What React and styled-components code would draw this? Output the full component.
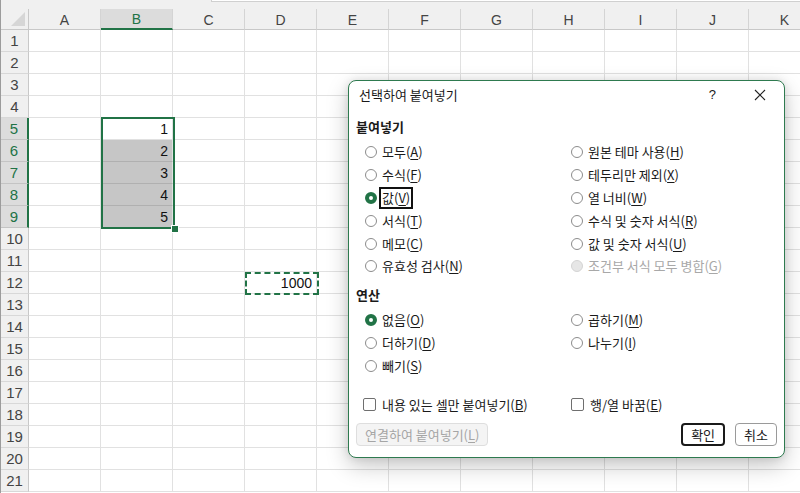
import styled, { createGlobalStyle } from "styled-components";

const GREEN = "#217346";
const COLS = ["A", "B", "C", "D", "E", "F", "G", "H", "I", "J", "K"];
const ROWS = Array.from({ length: 21 }, (_, i) => i + 1);
const VALUES = { "B5": "1", "B6": "2", "B7": "3", "B8": "4", "B9": "5", "D12": "1000" };

const Global = createGlobalStyle`
  html, body { margin: 0; padding: 0; background: #fff; }
  body { font-family: "Noto Sans CJK KR", "Noto Sans", sans-serif; }
`;

const Page = styled.div`
  position: relative;
  width: 800px;
  height: 493px;
  overflow: hidden;
  background: #fff;
  border-left: 1px solid #9c9c9c;
  box-sizing: border-box;
`;

const TopStrip = styled.div`
  height: 9px;
  background: #f0f0f0;
  display: flex;
`;

const FormulaEdge = styled.div`
  margin-left: 210px;
  flex: 1;
  height: 1px;
  background: #fff;
  border-left: 1px solid #d0d0d0;
  border-bottom: 1px solid #d0d0d0;
`;

const Sheet = styled.div`
  position: relative;
  display: grid;
  grid-template-columns: 28px repeat(11, 72px);
  grid-template-rows: 21px repeat(21, 22px);
  font-family: "Liberation Sans", "Open Sans", sans-serif;
  font-size: 14px;
`;

const Corner = styled.div`
  background: #f0f0f0;
  border-right: 1px solid #c8c8c8;
  border-bottom: 1px solid #c8c8c8;
  position: relative;
  &::after {
    content: "";
    position: absolute;
    right: 3px;
    bottom: 3px;
    border-style: solid;
    border-width: 0 0 14px 14px;
    border-color: transparent transparent #d6d6d6 transparent;
  }
`;

const ColHead = styled.div`
  box-sizing: border-box;
  background: ${(p) => (p.$active ? "#dcdcdc" : "#f0f0f0")};
  color: ${(p) => (p.$active ? GREEN : "#444")};
  border-right: 1px solid #d4d4d4;
  border-bottom: ${(p) => (p.$active ? `2px solid ${GREEN}` : "1px solid #c8c8c8")};
  display: flex;
  align-items: center;
  justify-content: center;
  padding-top: 1px;
`;

const RowHead = styled.div`
  box-sizing: border-box;
  background: ${(p) => (p.$active ? "#dcdcdc" : "#f0f0f0")};
  color: ${(p) => (p.$active ? GREEN : "#444")};
  border-right: ${(p) => (p.$active ? `2px solid ${GREEN}` : "1px solid #c8c8c8")};
  border-bottom: 1px solid ${(p) => (p.$active ? "#c4c4c4" : "#d8d8d8")};
  display: flex;
  align-items: center;
  justify-content: center;
  font-size: 15px;
`;

const Cell = styled.div`
  box-sizing: border-box;
  background: ${(p) => (p.$shade ? "#c6c6c6" : "#fff")};
  border-right: 1px solid #e1e1e1;
  border-bottom: 1px solid ${(p) => (p.$shade ? "#b0b0b0" : "#e1e1e1")};
  display: flex;
  align-items: center;
  justify-content: flex-end;
  padding-right: 4px;
  color: #111;
`;

const Selection = styled.div`
  position: absolute;
  left: 100px;
  top: 108px;
  width: 74px;
  height: 112px;
  border: 2px solid ${GREEN};
  box-sizing: border-box;
  pointer-events: none;
`;

const FillHandle = styled.div`
  position: absolute;
  left: 170px;
  top: 216px;
  width: 6px;
  height: 6px;
  background: ${GREEN};
  border: 1px solid #fff;
`;

const Marquee = styled.div`
  position: absolute;
  left: 244px;
  top: 263px;
  width: 74px;
  height: 23px;
  border: 2px dashed ${GREEN};
  box-sizing: border-box;
`;

const Dialog = styled.div`
  position: absolute;
  left: 347px;
  top: 80px;
  width: 437px;
  height: 378px;
  box-sizing: border-box;
  background: #fff;
  border: 1px solid #2e7a4f;
  border-radius: 8px;
  box-shadow: 0 8px 22px rgba(0, 0, 0, 0.22), 0 0 8px rgba(0, 0, 0, 0.1);
  display: flex;
  flex-direction: column;
  font-family: "Noto Sans CJK KR", "Noto Sans", sans-serif;
  font-size: 13px;
  color: #1a1a1a;
`;

const TitleBar = styled.div`
  height: 27px;
  display: flex;
  align-items: center;
  padding-left: 10px;
  padding-right: 18px;
`;

const Title = styled.div`
  flex: 1;
  line-height: 16px;
`;

const HelpMark = styled.span`
  font-family: "Liberation Sans", sans-serif;
  font-size: 13px;
  margin-right: 38px;
`;

const Body = styled.div`
  display: flex;
  flex-direction: column;
  padding: 0 7px;
`;

const SectionLabel = styled.div`
  font-weight: 700;
  height: 20px;
  line-height: 20px;
  margin-top: ${(p) => p.$mt}px;
`;

const OptionGrid = styled.div`
  display: grid;
  grid-template-columns: 206px 1fr;
  grid-auto-rows: 22.8px;
  padding-left: 9px;
  margin-top: 4px;
`;

const Option = styled.div`
  display: flex;
  align-items: center;
  gap: 5px;
  color: ${(p) => (p.$disabled ? "#a8a8a8" : "#1a1a1a")};
  grid-column: ${(p) => p.$col};
  grid-row: ${(p) => p.$row};
`;

const Radio = styled.span`
  width: 12px;
  height: 12px;
  box-sizing: border-box;
  border-radius: 50%;
  flex: none;
  border: ${(p) =>
    p.$checked ? `4px solid ${GREEN}` : p.$disabled ? "1px solid #d4d4d4" : "1px solid #8c8c8c"};
  background: ${(p) => (p.$disabled ? "#e6e6e6" : "#fff")};
`;

const Label = styled.span`
  line-height: 16px;
  padding: 1px 1px;
  border: 2px solid ${(p) => (p.$focus ? "#111" : "transparent")};
  margin-left: -3px;
  & u {
    text-decoration: underline;
    text-underline-offset: 2px;
  }
`;

const CheckGrid = styled.div`
  display: grid;
  grid-template-columns: 208px 1fr;
  padding-left: 7px;
  margin-top: 16px;
  height: 23px;
`;

const CheckOption = styled.div`
  display: flex;
  align-items: center;
  gap: 6px;
`;

const Box = styled.span`
  width: 13px;
  height: 13px;
  box-sizing: border-box;
  border: 1px solid #6f6f6f;
  border-radius: 2px;
  flex: none;
`;

const ButtonRow = styled.div`
  display: flex;
  align-items: center;
  margin-top: 7px;
`;

const Button = styled.div`
  height: 23px;
  box-sizing: border-box;
  padding: 0 ${(p) => p.$px}px;
  display: flex;
  align-items: center;
  justify-content: center;
  border-radius: 4px;
  line-height: 16px;
  background: ${(p) => (p.$disabled ? "#f4f4f4" : "#fff")};
  color: ${(p) => (p.$disabled ? "#a5a5a5" : "#1a1a1a")};
  border: ${(p) =>
    p.$primary ? "2px solid #1a1a1a" : p.$disabled ? "1px solid #dedede" : "1px solid #9a9a9a"};
  margin-left: ${(p) => p.$ml || 0}px;
  & u {
    text-underline-offset: 2px;
  }
`;

const Spacer = styled.div`
  flex: 1;
`;

const pasteOptions = [
  { t: "모두", k: "A", col: 1, row: 1 },
  { t: "수식", k: "F", col: 1, row: 2 },
  { t: "값", k: "V", col: 1, row: 3, checked: true, focus: true },
  { t: "서식", k: "T", col: 1, row: 4 },
  { t: "메모", k: "C", col: 1, row: 5 },
  { t: "유효성 검사", k: "N", col: 1, row: 6 },
  { t: "원본 테마 사용", k: "H", col: 2, row: 1 },
  { t: "테두리만 제외", k: "X", col: 2, row: 2 },
  { t: "열 너비", k: "W", col: 2, row: 3 },
  { t: "수식 및 숫자 서식", k: "R", col: 2, row: 4 },
  { t: "값 및 숫자 서식", k: "U", col: 2, row: 5 },
  { t: "조건부 서식 모두 병합", k: "G", col: 2, row: 6, disabled: true },
];

const opOptions = [
  { t: "없음", k: "O", col: 1, row: 1, checked: true },
  { t: "더하기", k: "D", col: 1, row: 2 },
  { t: "빼기", k: "S", col: 1, row: 3 },
  { t: "곱하기", k: "M", col: 2, row: 1 },
  { t: "나누기", k: "I", col: 2, row: 2 },
];

const Mn = ({ text, k }) => (
  <>
    {text}(<u>{k}</u>)
  </>
);

const OptionList = ({ items }) => (
  <OptionGrid>
    {items.map((o) => (
      <Option key={o.t} $col={o.col} $row={o.row} $disabled={o.disabled}>
        <Radio $checked={o.checked} $disabled={o.disabled} />
        <Label $focus={o.focus}>
          <Mn text={o.t} k={o.k} />
        </Label>
      </Option>
    ))}
  </OptionGrid>
);

const CloseIcon = () => (
  <svg width="12" height="12" viewBox="0 0 12 12">
    <path d="M1 1 L11 11 M11 1 L1 11" stroke="#222" strokeWidth="1.1" />
  </svg>
);

const inSel = (c, r) => c === "B" && r >= 5 && r <= 9;

export default function App() {
  return (
    <Page>
      <Global />
      <TopStrip>
        <FormulaEdge />
      </TopStrip>
      <Sheet>
        <Corner />
        {COLS.map((c) => (
          <ColHead key={c} $active={c === "B"}>
            {c}
          </ColHead>
        ))}
        {ROWS.map((r) => (
          <Row key={r} r={r} />
        ))}
        <Selection />
        <FillHandle />
        <Marquee />
      </Sheet>
      <Dialog>
        <TitleBar>
          <Title>선택하여 붙여넣기</Title>
          <HelpMark>?</HelpMark>
          <CloseIcon />
        </TitleBar>
        <Body>
          <SectionLabel $mt={9}>붙여넣기</SectionLabel>
          <OptionList items={pasteOptions} />
          <SectionLabel $mt={7}>연산</SectionLabel>
          <OptionList items={opOptions} />
          <CheckGrid>
            <CheckOption>
              <Box />
              <span>
                <Mn text="내용 있는 셀만 붙여넣기" k="B" />
              </span>
            </CheckOption>
            <CheckOption>
              <Box />
              <span>
                <Mn text="행/열 바꿈" k="E" />
              </span>
            </CheckOption>
          </CheckGrid>
          <ButtonRow>
            <Button $disabled $px={8}>
              <Mn text="연결하여 붙여넣기" k="L" />
            </Button>
            <Spacer />
            <Button $primary $px={8}>
              확인
            </Button>
            <Button $ml={10} $px={8}>
              취소
            </Button>
          </ButtonRow>
        </Body>
      </Dialog>
    </Page>
  );
}

function Row({ r }) {
  const active = r >= 5 && r <= 9;
  return (
    <>
      <RowHead $active={active}>{r}</RowHead>
      {COLS.map((c) => (
        <Cell key={c} $shade={inSel(c, r) && r > 5}>
          {VALUES[c + r] || ""}
        </Cell>
      ))}
    </>
  );
}
